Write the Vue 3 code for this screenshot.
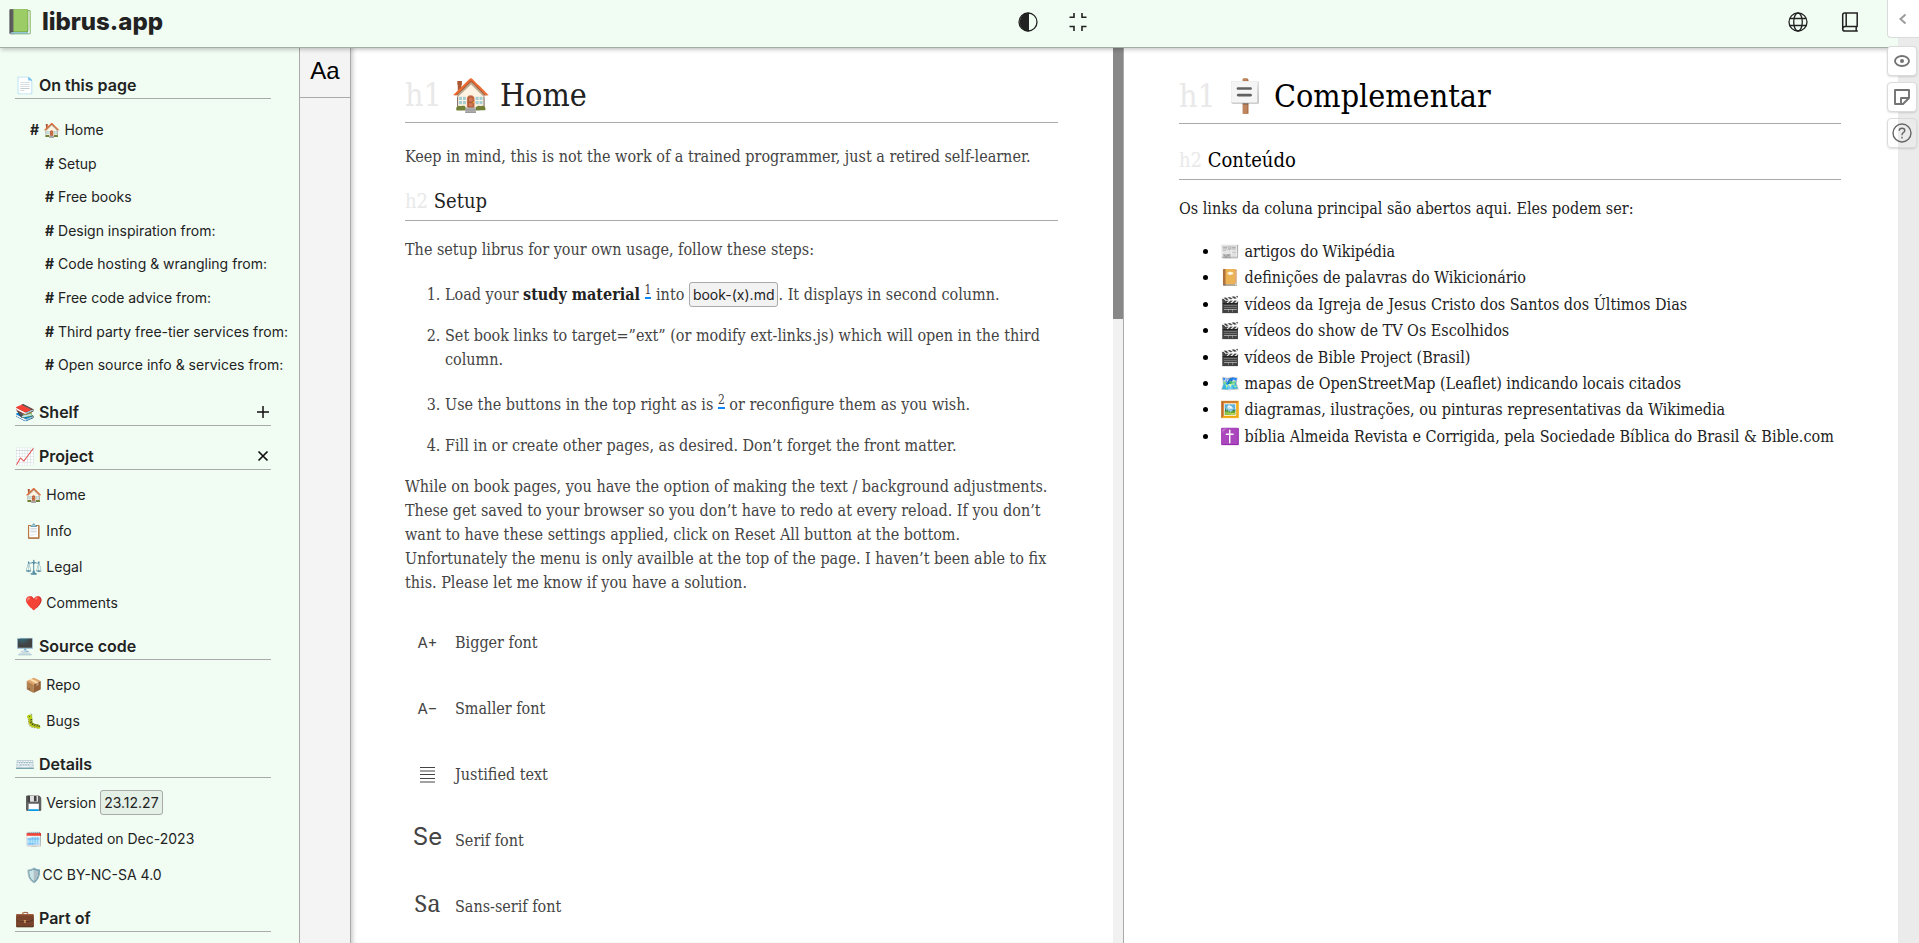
<script setup>
const toc = [
  'Setup',
  'Free books',
  'Design inspiration from:',
  'Code hosting & wrangling from:',
  'Free code advice from:',
  'Third party free-tier services from:',
  'Open source info & services from:',
]
const project = ['🏠 Home', '📋 Info', '⚖️ Legal', '❤️ Comments']
const source = ['📦 Repo', '🐛 Bugs']
const settings = [
  { glyph: 'A+', label: 'Bigger font', kind: 'small' },
  { glyph: 'A−', label: 'Smaller font', kind: 'small' },
  { glyph: '', label: 'Justified text', kind: 'lines' },
  { glyph: 'Se', label: 'Serif font', kind: 'large' },
  { glyph: 'Sa', label: 'Sans-serif font', kind: 'slab' },
]
const links = [
  '📰 artigos do Wikipédia',
  '📔 definições de palavras do Wikicionário',
  '🎬 vídeos da Igreja de Jesus Cristo dos Santos dos Últimos Dias',
  '🎬 vídeos do show de TV Os Escolhidos',
  '🎬 vídeos de Bible Project (Brasil)',
  '🗺️ mapas de OpenStreetMap (Leaflet) indicando locais citados',
  '🖼️ diagramas, ilustrações, ou pinturas representativas da Wikimedia',
  '✝️ bíblia Almeida Revista e Corrigida, pela Sociedade Bíblica do Brasil & Bible.com',
]
</script>

<template>
  <div class="page">
    <header class="topbar">
      <a class="brand" href="#"><span class="brand-icon">📗</span><span class="brand-name">librus.app</span></a>
      <div class="tools tools-main">
        <button type="button" aria-label="Toggle contrast">
          <svg width="20" height="20" viewBox="0 0 20 20"><circle cx="10" cy="10" r="9" fill="none" stroke="#222" stroke-width="1.3" /><path d="M11 .6A9.4 9.4 0 0 0 11 19.4z" fill="#222" /></svg>
        </button>
        <button type="button" aria-label="Exit full screen">
          <svg width="20" height="20" viewBox="0 0 20 20" fill="none" stroke="#222" stroke-width="1.6"><path d="M1.5 5.2H6V1M18.500 5.200H14V1M1.500 14.500H6V19M18.500 14.500H14V19" /></svg>
        </button>
      </div>
      <div class="tools tools-side">
        <button type="button" aria-label="Language">
          <svg width="20" height="20" viewBox="0 0 20 20" fill="none" stroke="#222" stroke-width="1.3"><circle cx="10" cy="10" r="9" /><ellipse cx="10" cy="10" rx="4.300" ry="9" /><path d="M1.900 6.500H18.100M1.900 13.500H18.100" /></svg>
        </button>
        <button type="button" aria-label="Books">
          <svg width="20" height="20" viewBox="0 0 20 20" fill="none" stroke="#222" stroke-width="1.5"><path d="M17.200 14.500V1H4.700Q2.700 1 2.700 3V17M17.800 14.600H5Q2.700 14.600 2.700 16.900Q2.700 19 5 19H17.800M6.200 1V14.500M16.200 14.600V19" /></svg>
        </button>
      </div>
    </header>

    <div class="columns">
      <nav class="sidebar" aria-label="Site">
        <h2><span>📄 On this page</span></h2>
        <ul class="toc">
          <li class="top"><a href="#home"><b>#</b> 🏠 Home</a></li>
          <li v-for="t in toc" :key="t"><a href="#setup"><b>#</b> {{ t }}</a></li>
        </ul>
        <h2><span>📚 Shelf</span>
          <button type="button" aria-label="Open shelf"><svg width="14" height="14" viewBox="0 0 14 14" stroke="#111" stroke-width="1.500"><path d="M7 1V13M1 7H13" /></svg></button>
        </h2>
        <h2><span>📈 Project</span>
          <button type="button" aria-label="Close project"><svg width="14" height="14" viewBox="0 0 14 14" stroke="#111" stroke-width="1.700"><path d="M2.500 2.500L11.500 11.500M11.500 2.500L2.500 11.500" /></svg></button>
        </h2>
        <ul>
          <li v-for="t in project" :key="t"><a href="#">{{ t }}</a></li>
        </ul>
        <h2><span>🖥️ Source code</span></h2>
        <ul>
          <li v-for="t in source" :key="t"><a href="#">{{ t }}</a></li>
        </ul>
        <h2><span>⌨️ Details</span></h2>
        <ul>
          <li>💾 Version <code>23.12.27</code></li>
          <li>🗓️ Updated on Dec-2023</li>
          <li><a href="#">🛡️CC BY-NC-SA 4.0</a></li>
        </ul>
        <h2><span>💼 Part of</span></h2>
      </nav>

      <div class="rail"><button type="button" aria-label="Text settings">Aa</button></div>

      <main class="book">
        <article>
          <h1 id="home"><span class="tag">h1</span> 🏠 Home</h1>
          <p class="intro">Keep in mind, this is not the work of a trained programmer, just a retired self-learner.</p>
          <h2 id="setup"><span class="tag">h2</span> Setup</h2>
          <p>The setup librus for your own usage, follow these steps:</p>
          <ol>
            <li>Load your <strong>study material</strong> <sup><a href="#fn1">1</a></sup> into <code>book-(x).md</code>. It displays in second column.</li>
            <li>Set book links to target=”ext” (or modify ext-links.js) which will open in the third column.</li>
            <li class="spaced">Use the buttons in the top right as is <sup><a href="#fn2">2</a></sup> or reconfigure them as you wish.</li>
            <li>Fill in or create other pages, as desired. Don’t forget the front matter.</li>
          </ol>
          <p>While on book pages, you have the option of making the text / background adjustments. These get saved to your browser so you don’t have to redo at every reload. If you don’t want to have these settings applied, click on Reset All button at the bottom. Unfortunately the menu is only availble at the top of the page. I haven’t been able to fix this. Please let me know if you have a solution.</p>
          <ul class="settings">
            <li v-for="s in settings" :key="s.label">
              <span class="glyph" :class="s.kind">
                <svg v-if="s.kind === 'lines'" width="16" height="16" viewBox="0 0 16 16" stroke="#444" stroke-width="1"><path d="M0 .5H15M0 4H15M0 7.500H15M0 11.500H15M0 15H15" /></svg>
                <template v-else>{{ s.glyph }}</template>
              </span>
              <span>{{ s.label }}</span>
            </li>
          </ul>
        </article>
        <div class="scrollbar" aria-hidden="true"><div class="thumb"></div></div>
      </main>

      <aside class="extra">
        <h1><span class="tag">h1</span> 🪧 Complementar</h1>
        <h2><span class="tag">h2</span> Conteúdo</h2>
        <p>Os links da coluna principal são abertos aqui. Eles podem ser:</p>
        <ul>
          <li v-for="l in links" :key="l">{{ l }}</li>
        </ul>
      </aside>
    </div>

    <div class="notes">
      <button class="toggle" type="button" aria-label="Open annotations">
        <svg width="12" height="14" viewBox="0 0 12 14" fill="none" stroke="#9c9c9c" stroke-width="2"><path d="M7.500 2.500L2.500 7L7.500 11.500" /></svg>
      </button>
      <button type="button" aria-label="Show highlights">
        <svg width="16" height="12" viewBox="0 0 16 12"><ellipse cx="8" cy="6" rx="7" ry="5" fill="none" stroke="#737373" stroke-width="1.900" /><circle cx="8" cy="6" r="2" fill="#737373" /></svg>
      </button>
      <button type="button" aria-label="New note">
        <svg width="16" height="16" viewBox="0 0 16 16" fill="none" stroke="#737373" stroke-width="1.900" stroke-linejoin="round"><path d="M1 1H15V9L9 15H1zM7 15V9H15" /></svg>
      </button>
      <button class="help" type="button" aria-label="Help">
        <svg width="20" height="20" viewBox="0 0 20 20" fill="none" stroke="#666" stroke-width="1.400"><circle cx="10" cy="10" r="9" /><path d="M7.200 7.800Q7.200 5.300 10 5.300Q12.800 5.300 12.800 7.500Q12.800 8.700 11.300 9.700Q10 10.600 10 12.300M10 13.800V15.600" /></svg>
      </button>
    </div>
  </div>
</template>

<style>
body {
  background: #fff;
}
</style>

<style scoped>
.page {
  --slab: "Roboto Slab", "DejaVu Serif Condensed", "Liberation Serif", "Noto Color Emoji", serif;
  --sans: Inter, "Liberation Sans", "Noto Color Emoji", sans-serif;
  --rule: #aaa;
  position: relative;
  display: flex;
  flex-direction: column;
  height: 100vh;
  overflow: hidden;
  font-family: var(--sans);
  color: #222;
}
button {
  display: flex;
  align-items: center;
  justify-content: center;
  padding: 0;
  border: 0;
  background: none;
}
a {
  color: inherit;
  text-decoration: none;
}
ul,
ol {
  margin: 0;
  padding: 0;
  list-style: none;
}
.topbar,
.columns {
  display: grid;
  grid-template-columns: 300px 51px minmax(0, 1fr) minmax(0, 1fr);
  padding-right: 22px;
}
.topbar {
  z-index: 1;
  height: 47px;
  flex: none;
  align-items: center;
  border-bottom: 1px solid #a5aea6;
  background: #f1fcf3;
  box-shadow: 0 3px 4px -1px #0003;
}
.brand {
  display: flex;
  align-items: center;
  gap: 7px;
  margin-top: -4px;
  padding-left: 5px;
}
.brand-icon {
  font-size: 24px;
}
.brand-name {
  font-size: 24px;
  font-weight: 800;
}
.tools {
  display: flex;
  justify-content: flex-end;
  margin-top: -4px;
}
.tools-main {
  grid-column: 3;
  gap: 30px;
  padding-right: 36px;
}
.tools-side {
  gap: 32px;
  padding-right: 37px;
}
.columns {
  flex: 1;
  min-height: 0;
}
.sidebar {
  padding: 14px 0 0 15px;
  border-right: 1px solid var(--rule);
  background: #f1fcf3;
  overflow: hidden;
  white-space: nowrap;
  font-size: 14px;
}
.sidebar h2 {
  display: flex;
  align-items: flex-end;
  justify-content: space-between;
  height: 36px;
  margin: 0 28px 7px 0;
  padding-right: 1px;
  border-bottom: 1px solid var(--rule);
  font-size: 16px;
  font-weight: 600;
  line-height: 26px;
}
.sidebar h2 button {
  height: 26px;
}
.sidebar ul {
  margin-bottom: 2px;
  padding-left: 10px;
  line-height: 36px;
}
.sidebar .toc {
  margin: 0;
  padding: 7px 0 7px 30px;
  line-height: 2.4;
}
.toc .top {
  margin-left: -15px;
}
code {
  padding: 3px;
  border: 1px solid var(--rule);
  border-radius: 3px;
  background: #0000000d;
  color: #222;
  font-family: var(--sans);
  font-size: 14px;
  font-weight: 400;
}
.rail {
  border-right: 1px solid var(--rule);
  background: #f4f4f4;
}
.rail button {
  width: 100%;
  height: 50px;
  padding-bottom: 4px;
  border-bottom: 1px solid var(--rule);
  color: #000;
  font: 24px "Liberation Sans", sans-serif;
}
.book {
  display: flex;
  border-right: 1px solid var(--rule);
  box-shadow: inset 4px 0 4px -2px #0003;
  overflow: hidden;
  color: #444;
}
.book article {
  flex: 1;
  min-width: 0;
  padding: 22px 55px 0 54px;
}
.book,
.extra {
  font-family: var(--slab);
  font-size: 16px;
  font-weight: 300;
  line-height: 24px;
}
.scrollbar {
  width: 10px;
  background: #f1f1f1;
}
.thumb {
  height: 271px;
  background: #888;
}
h1,
h2 {
  font-weight: 400;
}
.book h1,
.extra h1 {
  height: 52px;
  margin: 0 0 22px;
  border-bottom: 1px solid var(--rule);
  font-size: 32px;
  line-height: 50px;
}
.book h2,
.extra h2 {
  height: 33px;
  margin: 0 0 17px;
  border-bottom: 1px solid var(--rule);
  font-size: 20px;
  line-height: 28px;
}
.book h1,
.book h2,
strong {
  color: #222;
}
.tag {
  color: #e9e9e9;
}
.book p {
  margin: 0 0 21px;
}
.book .intro {
  margin-bottom: 18px;
}
ol {
  list-style: decimal;
}
ol li {
  margin: 0 0 17px;
  margin-left: 40px;
}
ol .spaced {
  margin-top: 21px;
}
strong {
  font-weight: 700;
}
sup {
  font-size: 12px;
  line-height: 1;
}
sup a {
  border-bottom: 2px solid #0a84ff;
}
.settings {
  padding-top: 15px;
}
.settings li {
  display: grid;
  grid-template-columns: 50px 1fr;
  align-items: center;
  height: 24px;
  margin-bottom: 42px;
}
.glyph {
  display: flex;
  justify-content: center;
  padding-right: 5px;
  color: #444;
  font-family: var(--sans);
  font-weight: 400;
}
.small {
  font-size: 15px;
}
.large,
.slab {
  align-self: start;
  font-size: 24px;
  line-height: 16px;
}
.slab {
  font-family: "Noto Serif", "Liberation Serif", serif;
}
.extra {
  padding: 23px 56px 0 55px;
  color: #222;
  overflow: hidden;
}
.extra h1,
.extra h2 {
  color: #000;
}
.extra h2 {
  margin-top: 22px;
}
.extra p {
  margin: 0 0 18px;
}
.extra ul {
  padding-left: 41px;
  list-style: disc;
  line-height: 1.65;
  white-space: nowrap;
}
.extra li::marker {
  color: #000;
}
/* Annotation toolbar floats over the page's right edge. */
.notes {
  position: absolute;
  z-index: 2;
  top: 0;
  right: 0;
  bottom: 0;
  display: flex;
  flex-direction: column;
  align-items: flex-start;
  gap: 6px;
  width: 32px;
  background: linear-gradient(90deg, transparent 11px, #ebebeb 11px);
}
.notes button {
  width: 30px;
  height: 30px;
  border: 1px solid #dbdbdb;
  border-radius: 4px;
  background: #fff;
  box-shadow: 0 1px 2px #0002;
}
.notes .toggle {
  width: 32px;
  height: 38px;
  margin-bottom: 2px;
  border-width: 0 0 1px 1px;
  border-radius: 0 0 0 4px;
  box-shadow: none;
}
.notes .help {
  background: transparent;
}
</style>
